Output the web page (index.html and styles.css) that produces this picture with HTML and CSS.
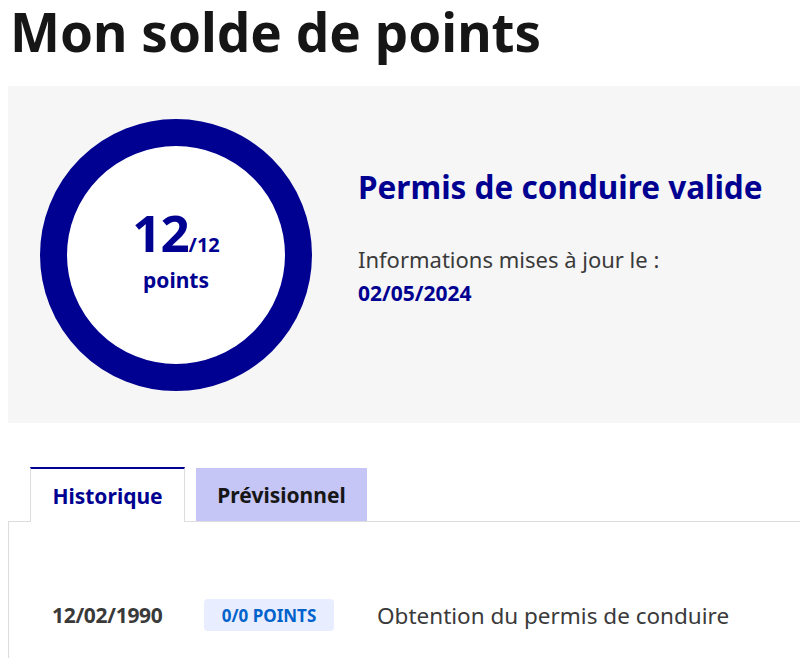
FILE: index.html
```html
<!DOCTYPE html>
<html lang="fr">
<head>
<meta charset="utf-8">
<title>Mon solde de points</title>
<link rel="stylesheet" href="styles.css">
</head>
<body>
<main class="page">
  <h1 class="title">Mon solde de points</h1>
  <section class="balance">
    <div class="gauge">
      <div class="gauge-value"><span class="big">12</span><span class="max">/12</span></div>
      <div class="gauge-label">points</div>
    </div>
    <div class="status">
      <h2 class="status-title">Permis de conduire valide</h2>
      <p class="status-info">Informations mises à jour le :</p>
      <p class="status-date">02/05/2024</p>
    </div>
  </section>
  <section class="tabs">
    <div class="tab-list">
      <button class="tab tab-active">Historique</button>
      <button class="tab tab-inactive">Prévisionnel</button>
    </div>
    <div class="tab-panel">
      <div class="row">
        <span class="row-date">12/02/1990</span>
        <span class="badge">0/0 points</span>
        <span class="row-text">Obtention du permis de conduire</span>
      </div>
    </div>
  </section>
</main>
</body>
</html>
```

FILE: styles.css
```css
* { box-sizing: border-box; }
html, body { margin: 0; padding: 0; }
body {
  margin-left: 8px;
  background: #fff;
  color: #161616;
  font-family: "Noto Sans", "Open Sans", sans-serif;
}
.page { display: flex; flex-direction: column; }
.title {
  margin: 0;
  padding-left: 2px;
  font-size: 53px;
  line-height: 64px;
  font-weight: 700;
  color: #161616;
}
.balance {
  margin-top: 22px;
  height: 337px;
  background: #f6f6f6;
  display: flex;
  align-items: center;
  padding-left: 32px;
  gap: 46px;
}
.gauge {
  flex: none;
  width: 272px;
  height: 272px;
  border-radius: 50%;
  border: 27px solid #000091;
  background: #fff;
  display: flex;
  flex-direction: column;
  align-items: center;
  justify-content: center;
  color: #000091;
  font-weight: 700;
  padding-bottom: 8px;
}
.gauge-value { line-height: 44px; height: 44px; display: flex; align-items: baseline; }
.big { font-size: 51px; letter-spacing: -1px; }
.max { font-size: 20px; }
.gauge-label { font-size: 21px; line-height: 24px; margin-top: 14px; }
.status { display: flex; flex-direction: column; padding-bottom: 35px; }
.status-title {
  margin: 0;
  font-size: 31.5px;
  font-weight: 700;
  color: #000091;
  line-height: 40px;
}
.status-info {
  margin: 36px 0 0;
  font-size: 22px;
  color: #3a3a3a;
  line-height: 32px;
}
.status-date {
  margin: 3px 0 0;
  font-size: 21px;
  font-weight: 700;
  color: #000091;
  line-height: 30px;
}
.tabs { margin-top: 44px; }
.tab-list { display: flex; gap: 11px; padding-left: 22px; align-items: flex-end; }
.tab {
  font-family: inherit;
  font-size: 21px;
  font-weight: 700;
  border: 0;
  margin: 0;
  padding: 0;
  cursor: pointer;
}
.tab-active {
  width: 155px;
  height: 55px;
  background: #fff;
  color: #000091;
  border-top: 2px solid #000091;
  border-left: 1px solid #ddd;
  border-right: 1px solid #ddd;
  margin-bottom: -1px;
  position: relative;
}
.tab-inactive {
  width: 171px;
  height: 53px;
  background: #c5c5f6;
  color: #161616;
}
.tab-panel {
  border-top: 1px solid #ddd;
  border-left: 1px solid #ddd;
  padding: 77px 0 40px 43px;
}
.row { display: flex; align-items: center; }
.row-date { font-size: 21px; font-weight: 700; color: #3a3a3a; width: 152px; letter-spacing: -0.3px; }
.badge {
  flex: none;
  background: #e8edff;
  color: #0063cb;
  font-weight: 700;
  font-size: 17px;
  text-transform: uppercase;
  border-radius: 4px;
  height: 32px;
  width: 130px;
  display: flex;
  align-items: center;
  justify-content: center;
}
.row-text { margin-left: 43px; font-size: 22.5px; color: #3a3a3a; white-space: nowrap; }
```
